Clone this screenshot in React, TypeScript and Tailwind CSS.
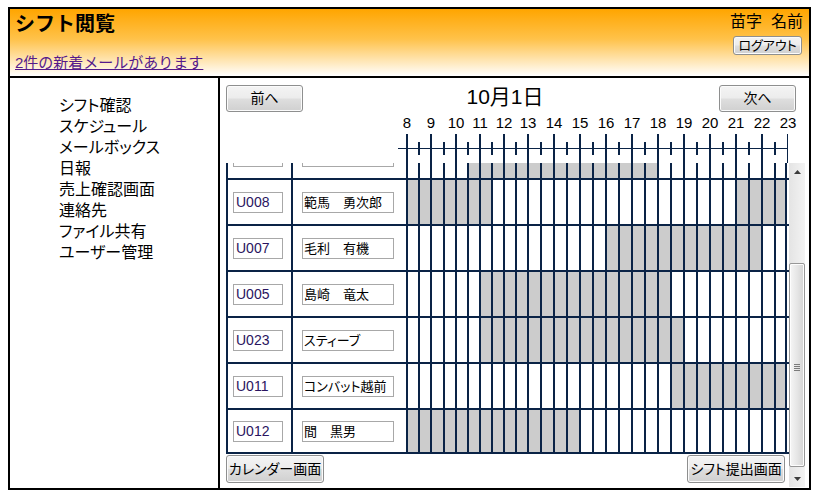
import React from "react";

const NAVY = "border-[#0a2346]";

const slotWidths = [12, 12, 13, 12, 12, 12, 12, 12, 12, 12, ...Array(20).fill(13)];
const bounds: number[] = [];
{
  let x = 406;
  for (const w of slotWidths) {
    bounds.push(x);
    x += w;
  }
  bounds.push(x);
}

type Row = { key: string; id: string; name: string; spans: [number, number][] };

const rows: Row[] = [
  { key: "r0", id: "", name: "", spans: [[5, 20]] },
  { key: "r1", id: "U008", name: "範馬　勇次郎", spans: [[0, 7], [26, 30]] },
  { key: "r2", id: "U007", name: "毛利　有機", spans: [[16, 28]] },
  { key: "r3", id: "U005", name: "島崎　竜太", spans: [[6, 21]] },
  { key: "r4", id: "U023", name: "スティーブ", spans: [[6, 22]] },
  { key: "r5", id: "U011", name: "コンバット越前", spans: [[21, 30]] },
  { key: "r6", id: "U012", name: "間　黒男", spans: [[0, 14]] },
];

const menu = ["シフト確認", "スケジュール", "メールボックス", "日報", "売上確認画面", "連絡先", "ファイル共有", "ユーザー管理"];

const btn =
  "flex items-center justify-center border border-[#8e8f8f] rounded-[3px] bg-[linear-gradient(to_bottom,#f4f4f4_0%,#ececec_48%,#dedede_52%,#d0d0d0_100%)] shadow-[inset_0_0_0_1px_#fbfbfb] text-black";

function isFilled(spans: [number, number][], i: number) {
  return spans.some(([a, b]) => i >= a && i < b);
}

function Ruler() {
  const x0 = 398;
  return (
    <svg width={390} height={29} className="block">
      <rect x={0} y={14} width={390} height={1} fill="#0a2346" />
      {bounds.map((b, i) =>
        i % 2 === 0 ? (
          <rect key={i} x={b - x0} y={0} width={2} height={29} fill="#0a2346" />
        ) : (
          <rect key={i} x={b - x0} y={8} width={2} height={13} fill="#0a2346" />
        )
      )}
    </svg>
  );
}

function Scrollbar() {
  return (
    <div className="w-[16px] h-full flex flex-col bg-[linear-gradient(to_right,#e4e4e4,#f3f3f3)]">
      <div className="h-[17px] flex items-center justify-center">
        <svg width="7" height="4" className="block">
          <polygon points="3.5,0 7,4 0,4" fill="#3c3c3c" />
        </svg>
      </div>
      <div className="h-[83px]" />
      <div className="h-[204px] border border-[#979797] rounded-[2px] bg-[linear-gradient(to_right,#f6f6f6,#e6e6e6_50%,#d4d4d4)] shadow-[inset_0_0_0_1px_#fdfdfd] flex items-center justify-center">
        <div className="flex flex-col gap-[1px] mt-[4px]">
          <div className="w-[6px] h-[1px] bg-[#7b7b7b]" />
          <div className="w-[6px] h-[1px] bg-[#7b7b7b]" />
          <div className="w-[6px] h-[1px] bg-[#7b7b7b]" />
          <div className="w-[6px] h-[1px] bg-[#7b7b7b]" />
        </div>
      </div>
      <div className="flex-1" />
      <div className="h-[17px] flex items-center justify-center">
        <svg width="7" height="4" className="block">
          <polygon points="0,0 7,0 3.5,4" fill="#3c3c3c" />
        </svg>
      </div>
    </div>
  );
}

function GridRow({ row, last }: { row: Row; last: boolean }) {
  return (
    <div className={"flex h-[46px] border-t-2 " + NAVY + (last ? " border-b-2" : "")}>
      <div className={"w-[65px] shrink-0 border-l-2 " + NAVY + " flex items-center pl-[5px]"}>
        <div className="w-[50px] h-[21px] border border-[#a8a8a8] flex items-center pl-[2px] text-[14px] text-[#2a1460] leading-none">
          {row.id}
        </div>
      </div>
      <div className={"w-[115px] shrink-0 border-l-2 " + NAVY + " flex items-center pl-[9px]"}>
        <div className="w-[92px] h-[21px] border border-[#a8a8a8] flex items-center pl-[1px] text-[13px] text-black leading-none whitespace-nowrap overflow-hidden [font-feature-settings:'palt']">
          {row.name}
        </div>
      </div>
      {slotWidths.map((w, i) => (
        <div
          key={i}
          className={
            (w === 12 ? "w-[12px]" : "w-[13px]") +
            " shrink-0 border-l-2 " +
            NAVY +
            (isFilled(row.spans, i) ? " bg-[#cccccc]" : "") +
            (i === slotWidths.length - 1 ? " border-r-2" : "")
          }
        />
      ))}
    </div>
  );
}

export default function App() {
  return (
    <div className="w-[821px] h-[498px] bg-white pt-[7px] pl-[8px] font-['Liberation_Sans','Noto_Sans_CJK_JP',sans-serif] text-black">
      <div className="w-[803px] h-[483px] border-2 border-black flex flex-col">
        {/* Header */}
        <div className="h-[69px] shrink-0 border-b-2 border-black bg-[linear-gradient(to_bottom,#ffa500_0%,#ffc24a_45%,#ffffff_100%)] flex justify-between">
          <div className="pl-[5px] pt-[5px] flex flex-col">
            <div className="text-[20px] leading-[21px] font-bold">シフト閲覧</div>
            <a href="#" className="mt-[18px] text-[15px] leading-[20px] text-[#551a8b] underline">
              2件の新着メールがあります
            </a>
          </div>
          <div className="pr-[6px] pt-[3px] flex flex-col items-end">
            <div className="text-[16px] leading-[20px] flex">
              <span>苗字</span>
              <span className="ml-[9px]">名前</span>
            </div>
            <div className={btn + " mt-[4px] mr-[1px] w-[69px] h-[19px] text-[13px] leading-none [font-feature-settings:'palt']"}>
              ログアウト
            </div>
          </div>
        </div>

        {/* Body */}
        <div className="flex flex-1">
          <div className="w-[210px] shrink-0 border-r-2 border-black pl-[49px] pt-[17px]">
            <ul className="text-[16px] leading-[21px] [font-feature-settings:'palt']">
              {menu.map((m) => (
                <li key={m}>{m}</li>
              ))}
            </ul>
          </div>

          <div className="flex-1 pl-[6px] pt-[7px] flex flex-col">
            <div className="flex w-[570px] h-[27px]">
              <div className={btn + " w-[77px] h-[27px] text-[14px] [font-feature-settings:'palt']"}>前へ</div>
              <div className="flex-1 flex justify-center items-center pr-[12px] text-[21px] leading-[27px] -mt-[5px]">
                10月1日
              </div>
              <div className={btn + " w-[77px] h-[27px] text-[14px] [font-feature-settings:'palt']"}>次へ</div>
            </div>

            <div className="h-[51px] flex flex-col">
              <div className="flex h-[15px] mt-[3px] text-[15px] leading-[15px] font-['Liberation_Sans_Narrow','Liberation_Sans',sans-serif]">
                <div className="w-[180px] shrink-0" />
                {slotWidths.map((w, i) => (
                  <div key={i} className={(w === 12 ? "w-[12px]" : "w-[13px]") + " shrink-0"}>
                    {i % 2 === 0 && (
                      <div className="w-[2px] flex justify-center">
                        <span className="whitespace-nowrap">{8 + i / 2}</span>
                      </div>
                    )}
                  </div>
                ))}
                <div className="w-[2px] shrink-0 flex justify-center">
                  <span className="whitespace-nowrap">23</span>
                </div>
              </div>
              <div className="flex mt-[4px]">
                <div className="w-[172px] shrink-0" />
                <Ruler />
              </div>
            </div>

            <div className="flex h-[324px]">
              <div className="w-[563px] shrink-0 overflow-hidden">
                <div className="-mt-[31px]">
                  {rows.map((r, i) => (
                    <GridRow key={r.key} row={r} last={i === rows.length - 1} />
                  ))}
                  <div className="flex justify-between pr-[4px] mt-[1px]">
                    <div className={btn + " w-[98px] h-[28px] text-[14px] [font-feature-settings:'palt']"}>カレンダー画面</div>
                    <div className={btn + " w-[98px] h-[28px] text-[14px] [font-feature-settings:'palt']"}>シフト提出画面</div>
                  </div>
                </div>
              </div>
              <Scrollbar />
            </div>
          </div>
        </div>
      </div>
    </div>
  );
}
